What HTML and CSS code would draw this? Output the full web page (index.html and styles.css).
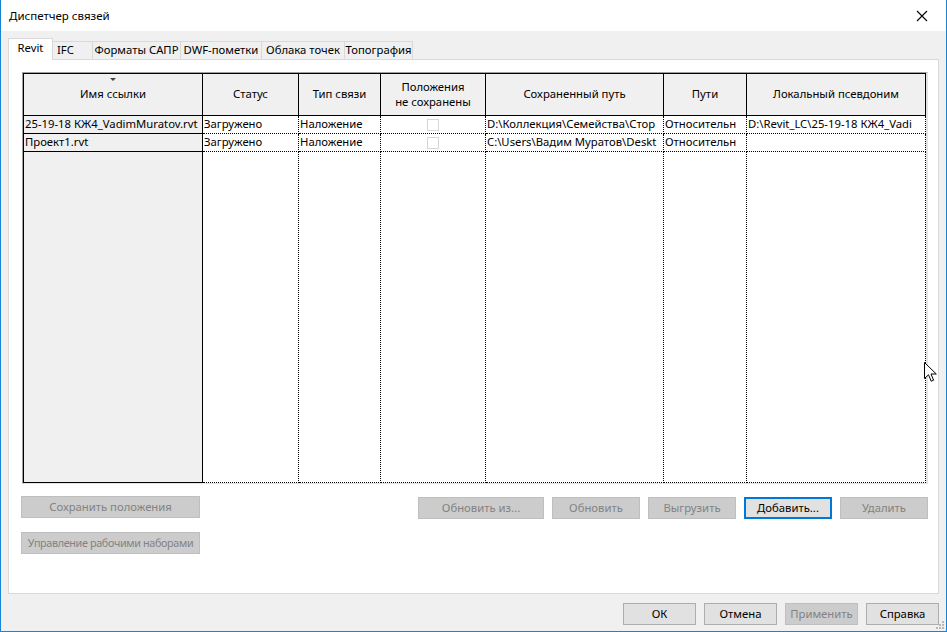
FILE: index.html
```html
<!DOCTYPE html>
<html lang="ru">
<head>
<meta charset="utf-8">
<title>Диспетчер связей</title>
<link rel="stylesheet" href="styles.css">
</head>
<body>
<div class="window">
  <div class="titlebar">
    <span class="title">Диспетчер связей</span>
    <svg class="close" width="12" height="12" viewBox="0 0 12 12"><path d="M1 1 L11 11 M11 1 L1 11" stroke="#000" stroke-width="1.1" fill="none"/></svg>
  </div>
  <div class="client">
    <div class="tabs">
      <div class="tab tab-active w-revit">Revit</div>
      <div class="tab w-ifc">IFC</div>
      <div class="tab w-cad">Форматы САПР</div>
      <div class="tab w-dwf">DWF-пометки</div>
      <div class="tab w-cloud">Облака точек</div>
      <div class="tab w-topo">Топография</div>
    </div>
    <div class="panel">
      <div class="grid-wrap">
        <div class="grid">
          <div class="hc first"><span class="sort-arrow"></span>Имя ссылки</div>
          <div class="hc">Статус</div>
          <div class="hc">Тип связи</div>
          <div class="hc">Положения<br>не сохранены</div>
          <div class="hc">Сохраненный путь</div>
          <div class="hc">Пути</div>
          <div class="hc">Локальный псевдоним</div>

          <div class="rc">25-19-18 КЖ4_VadimMuratov.rvt</div>
          <div class="dc">Загружено</div>
          <div class="dc">Наложение</div>
          <div class="dc center"><span class="check"></span></div>
          <div class="dc">D:\Коллекция\Семейства\Стор</div>
          <div class="dc">Относительн</div>
          <div class="dc">D:\Revit_LC\25-19-18 КЖ4_Vadi</div>

          <div class="rc">Проект1.rvt</div>
          <div class="dc">Загружено</div>
          <div class="dc">Наложение</div>
          <div class="dc center"><span class="check"></span></div>
          <div class="dc">C:\Users\Вадим Муратов\Deskt</div>
          <div class="dc">Относительн</div>
          <div class="dc"></div>

          <div class="rc fill"></div>
          <div class="dc"></div>
          <div class="dc"></div>
          <div class="dc"></div>
          <div class="dc"></div>
          <div class="dc"></div>
          <div class="dc"></div>
        </div>
      </div>
      <div class="actions">
        <div class="left-actions">
          <button class="btn disabled w-save">Сохранить положения</button>
          <button class="btn disabled w-save tight">Управление рабочими наборами</button>
        </div>
        <div class="right-actions">
          <button class="btn disabled w-upd-from">Обновить из...</button>
          <button class="btn disabled w-88">Обновить</button>
          <button class="btn disabled w-88">Выгрузить</button>
          <button class="btn focused w-88">Добавить...</button>
          <button class="btn disabled w-88">Удалить</button>
        </div>
      </div>
    </div>
    <div class="footer">
      <button class="btn w-foot">ОК</button>
      <button class="btn w-foot">Отмена</button>
      <button class="btn disabled w-foot">Применить</button>
      <button class="btn w-foot">Справка</button>
    </div>
  </div>
  <div class="grip">
    <svg width="10" height="10" viewBox="0 0 10 10">
      <rect x="7" y="1" width="2" height="2" fill="#b8b8b8"/>
      <rect x="4" y="4" width="2" height="2" fill="#b8b8b8"/>
      <rect x="7" y="4" width="2" height="2" fill="#b8b8b8"/>
      <rect x="1" y="7" width="2" height="2" fill="#b8b8b8"/>
      <rect x="4" y="7" width="2" height="2" fill="#b8b8b8"/>
      <rect x="7" y="7" width="2" height="2" fill="#b8b8b8"/>
    </svg>
  </div>
  <svg class="cursor" width="14" height="22" viewBox="0 0 14 22">
    <path d="M0.5 0.5 L0.5 16.5 L4.5 12.8 L7.2 19.2 L9.6 18.2 L7 12 L12.3 12 Z" fill="#fff" stroke="#000" stroke-width="1" stroke-linejoin="miter"/>
  </svg>
</div>
</body>
</html>
```
FILE: styles.css
```css
* { box-sizing: border-box; }
html, body { margin: 0; padding: 0; }
body {
  width: 947px;
  height: 632px;
  overflow: hidden;
  background: #f0f0f0;
  font-family: "Noto Sans", "Open Sans", sans-serif;
  font-size: 11.3px;
  color: #000;
}
.window {
  position: relative;
  width: 947px;
  height: 632px;
  border-left: 1px solid #1883d7;
  border-right: 1px solid #1883d7;
  border-bottom: 1px solid #1883d7;
  display: flex;
  flex-direction: column;
  background: #f0f0f0;
}
.titlebar {
  height: 31px;
  flex: none;
  background: #fff;
  display: flex;
  align-items: center;
  padding-left: 8px;
  padding-right: 18px;
  justify-content: space-between;
}
.title { font-size: 11.5px; line-height: 16px; margin-top: 1px; }
.client {
  flex: 1;
  display: flex;
  flex-direction: column;
  padding: 7px 7px 0 7px;
}
.tabs {
  display: flex;
  align-items: flex-end;
  height: 21px;
  position: relative;
  z-index: 1;
}
.tab {
  height: 18px;
  border: 1px solid #d9d9d9;
  border-bottom: none;
  background: #f0f0f0;
  margin-left: -1px;
  text-align: center;
  line-height: 16px;
  white-space: nowrap;
}
.tab-active {
  margin-left: 0;
  background: #fff;
  line-height: 18px;
  margin-bottom: -1px;
  height: 22px;
  position: relative;
  z-index: 2;
}
.w-revit { width: 45px; }
.w-ifc { width: 41px; text-align: left; padding-left: 4px; }
.w-cad { width: 89px; }
.w-dwf { width: 82px; }
.w-cloud { width: 84px; }
.w-topo { width: 69px; }

.panel {
  width: 931px;
  height: 535px;
  background: #fff;
  border: 1px solid #d9d9d9;
  padding: 12px 10px 0 13px;
  display: flex;
  flex-direction: column;
}
.grid-wrap {
  width: 906px;
  height: 412px;
  border-top: 1px solid #a0a0a0;
  border-left: 1px solid #a0a0a0;
  border-right: 2px solid #e3e3e3;
  border-bottom: 1px solid #e3e3e3;
  background: #fff;
}
.grid {
  display: grid;
  grid-template-columns: 180px 96px 82px 105px 178px 83px 179px;
  grid-template-rows: 43px 18px 18px 1fr;
  height: 410px;
}
.hc {
  background: #f0f0f0;
  border-top: 1px solid #000;
  border-right: 1px solid #000;
  border-bottom: 1px solid #000;
  display: flex;
  align-items: center;
  justify-content: center;
  text-align: center;
  line-height: 15px;
  position: relative;
  padding-bottom: 2px;
}
.hc.first { border-left: 1px solid #000; }
.sort-arrow {
  position: absolute;
  left: 86px;
  top: 4px;
  width: 0;
  height: 0;
  border-left: 3px solid transparent;
  border-right: 3px solid transparent;
  border-top: 3px solid #444;
}
.rc {
  background: #f0f0f0;
  border-left: 1px solid #000;
  border-right: 1px solid #000;
  border-bottom: 1px solid #000;
  padding-left: 1px;
  line-height: 16px;
  white-space: nowrap;
  overflow: hidden;
}
.dc {
  background: #fff;
  border-right: 1px dotted #000;
  border-bottom: 1px dotted #000;
  padding-left: 1px;
  line-height: 16px;
  white-space: nowrap;
  overflow: hidden;
}
.dc.center {
  display: flex;
  justify-content: center;
  align-items: center;
}
.check {
  width: 12px;
  height: 12px;
  border: 1px solid #d7d7d7;
  background: #fff;
  margin-left: -2px;
}

.actions {
  display: flex;
  justify-content: space-between;
  margin-top: 12px;
  margin-left: -1px;
}
.left-actions {
  display: flex;
  flex-direction: column;
  gap: 14px;
}
.right-actions {
  display: flex;
  gap: 8px;
  margin-top: 1px;
}
.btn {
  font-family: "Noto Sans", "Open Sans", sans-serif;
  font-size: 11.3px;
  height: 22px;
  padding: 0;
  margin: 0;
  background: #e1e1e1;
  border: 1px solid #adadad;
  color: #000;
  line-height: 18px;
  white-space: nowrap;
  text-align: center;
}
.btn.disabled {
  background: #cccccc;
  border-color: #bfbfbf;
  color: #838383;
}
.btn.focused {
  border: 2px solid #0078d7;
  background: #e1e1e1;
}
.btn.tight {
  font-size: 10.8px;
  letter-spacing: -0.35px;
  overflow: hidden;
}
.w-save { width: 179px; }
.w-upd-from { width: 126px; }
.w-88 { width: 88px; }
.w-foot { width: 73px; }

.footer {
  display: flex;
  justify-content: flex-end;
  gap: 8px;
  margin-top: 9px;
}
.grip {
  position: absolute;
  right: 1px;
  bottom: 1px;
  width: 10px;
  height: 10px;
  line-height: 0;
}
.cursor {
  position: absolute;
  left: 923px;
  top: 362px;
}
```
